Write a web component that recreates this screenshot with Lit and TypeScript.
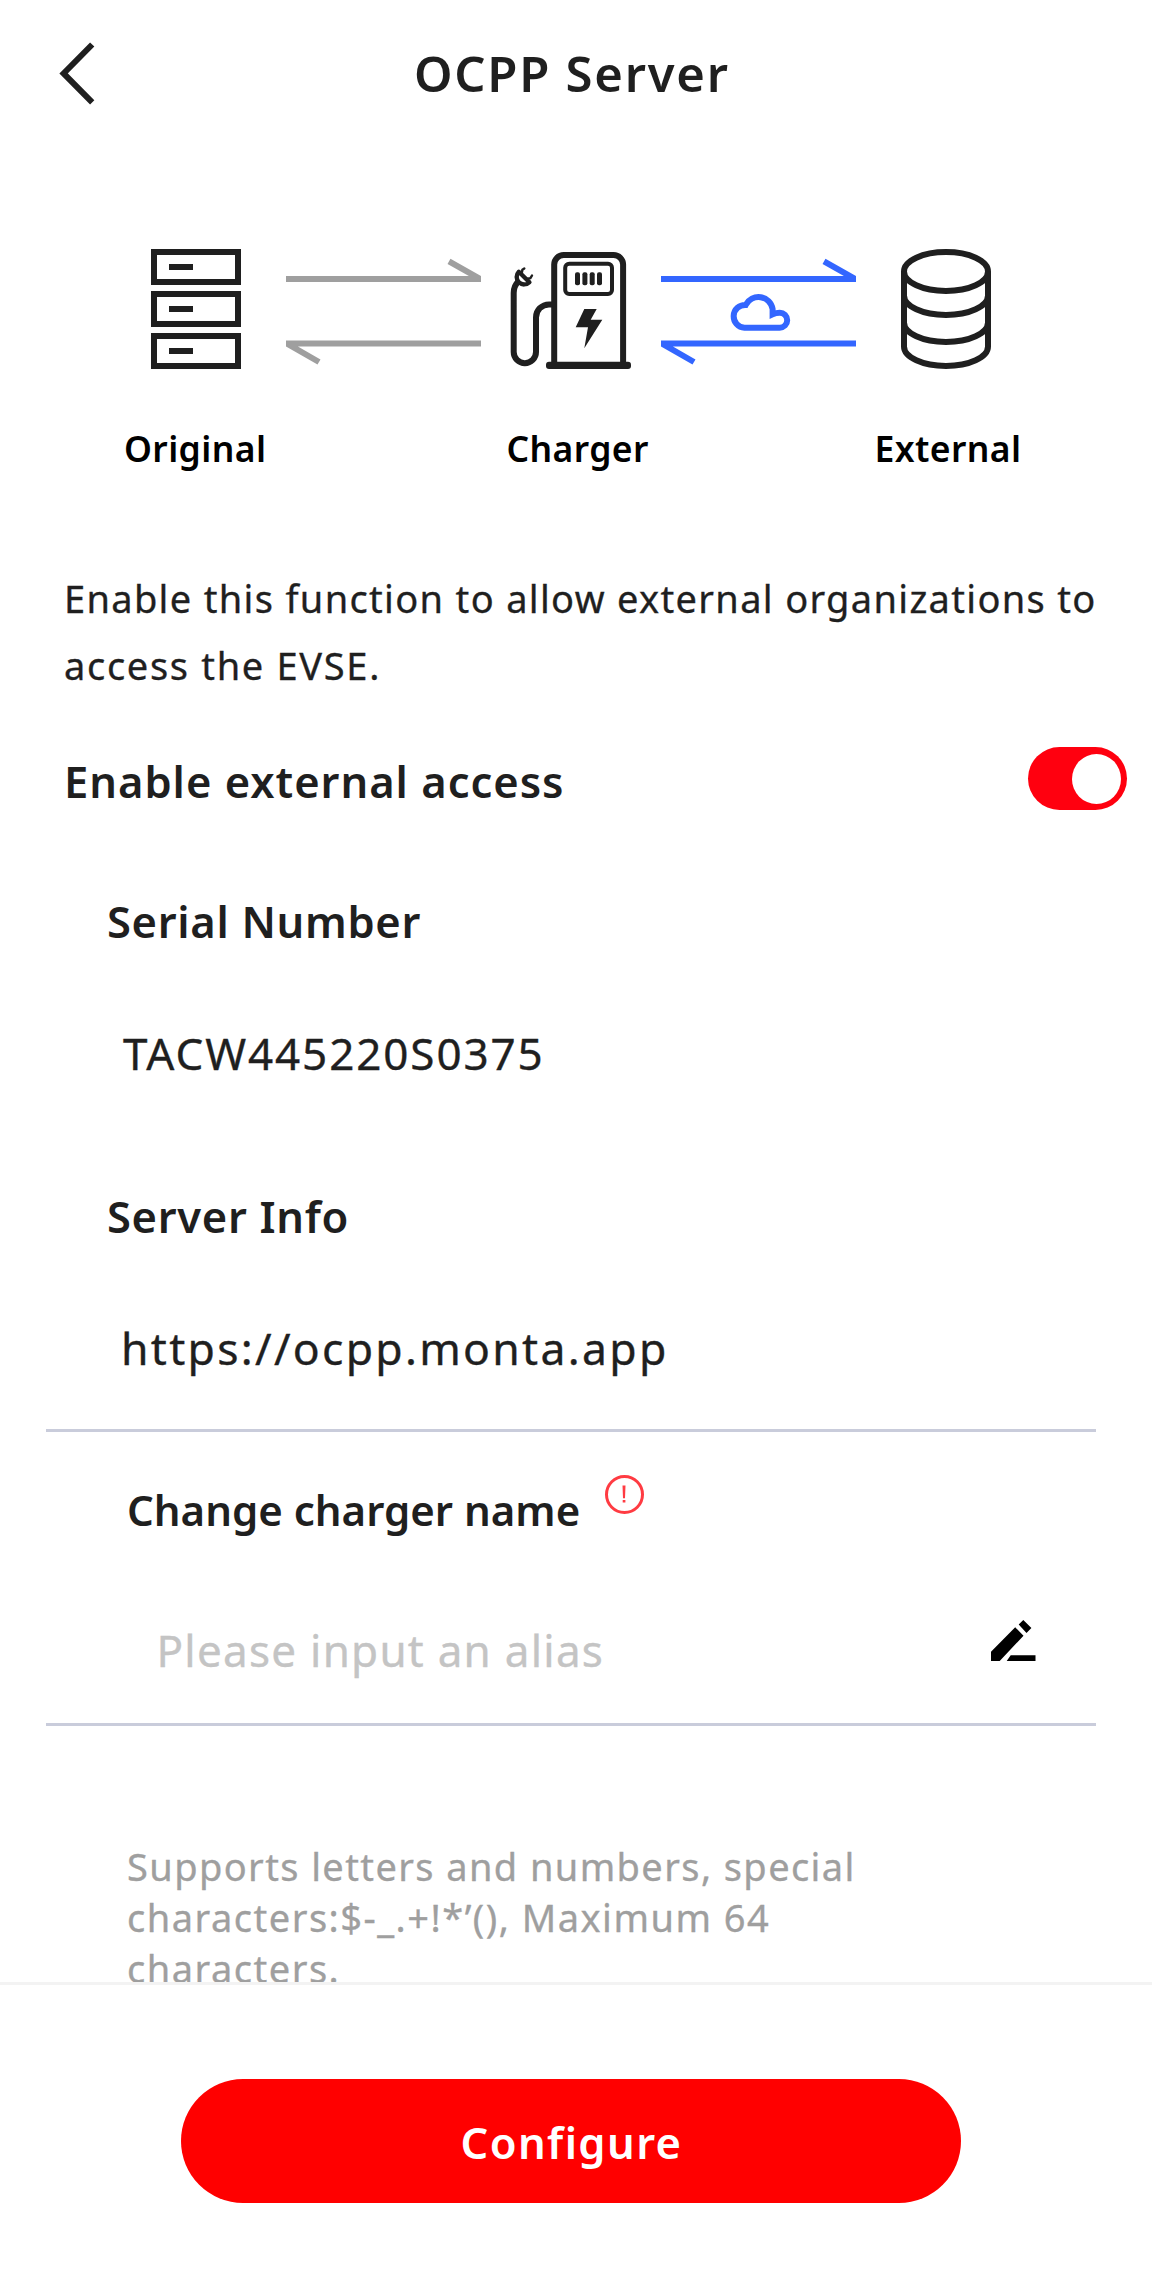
import { LitElement, html, css, svg } from "lit";
import { customElement, property, state } from "lit/decorators.js";

@customElement("link-arrows")
class LinkArrows extends LitElement {
  @property({ type: Boolean }) cloud = false;

  static styles = css`
    :host { display: block; width: 195px; height: 120px; }
    svg { display: block; }
    .stroke { fill: none; stroke: currentColor; stroke-width: 6; }
  `;

  render() {
    return html`
      <svg width="195" height="120" viewBox="0 0 195 120">
        <path class="stroke" d="M0 30H195M163 12.3L195 30.5M195 94.4H0M0 94L33 113" />
        ${this.cloud
          ? svg`<path class="stroke" d="M83.5 78.7H118.7A7.5 7.5 0 0 0 118.7 63.7Q115 63.7 111.6 65.3V60A14.3 14.3 0 0 0 84.7 55.9A11.4 11.4 0 0 0 83.5 78.7Z" />`
          : null}
      </svg>
    `;
  }
}

@customElement("toggle-switch")
class ToggleSwitch extends LitElement {
  @property({ type: Boolean }) checked = false;

  static styles = css`
    :host { display: block; }
    .track {
      box-sizing: border-box;
      display: flex;
      align-items: center;
      width: 99px;
      height: 63px;
      padding: 0 6px;
      border: 0;
      border-radius: 32px;
      background: #c4c4c4;
    }
    .on { justify-content: flex-end; background: #ff000f; }
    .knob { width: 49px; height: 50px; border-radius: 50%; background: #fff; }
  `;

  render() {
    return html`
      <button class="track ${this.checked ? "on" : ""}" role="switch" aria-checked=${this.checked}>
        <span class="knob"></span>
      </button>
    `;
  }
}

@customElement("app-root")
class AppRoot extends LitElement {
  @state() private enabled = true;

  static styles = css`
    :host {
      display: block;
      width: 1152px;
      height: 2296px;
      overflow: hidden;
      background: #fff;
      color: #1f1f1f;
      font-family: "Noto Sans", "Open Sans", sans-serif;
    }
    svg { display: block; flex: none; }
    .page { display: flex; flex-direction: column; height: 2296px; }
    .content { height: 1982px; overflow: hidden; flex: none; }
    .line { fill: none; stroke: #1f1f1f; stroke-width: 6; }
    .ink { fill: #1f1f1f; }

    .header { display: flex; align-items: flex-start; height: 249px; padding-left: 59px; }
    .back { margin-top: 42px; }
    .title {
      margin: 0 0 0 318px;
      font-size: 49px;
      font-weight: 600;
      line-height: 147px;
      letter-spacing: 1.75px;
      white-space: nowrap;
    }

    .icons { display: flex; height: 120px; padding-left: 151px; }
    .grey { margin: 0 29px 0 45px; color: #9f9f9f; }
    .blue { margin: 0 45px 0 30px; color: #3366ff; }
    .labels {
      display: grid;
      grid-template-columns: 382.5px 368px auto;
      padding: 52px 0 0 124px;
      font-size: 35.5px;
      font-weight: 600;
      line-height: 54px;
      letter-spacing: 0.4px;
      color: #000;
    }

    .description, .value, .input, .hint { -webkit-text-stroke: 0.35px currentColor; }
    .description {
      margin: 90px 0 0 64px;
      font-size: 38px;
      line-height: 67.3px;
      letter-spacing: 1.33px;
      white-space: nowrap;
    }
    .second { letter-spacing: 1.68px; }
    .access {
      display: flex;
      justify-content: space-between;
      height: 67px;
      margin-top: 47.5px;
      padding: 0 25px 0 64px;
      font-size: 43.5px;
      font-weight: 600;
      line-height: 68px;
      letter-spacing: 0.98px;
    }

    .field { padding-left: 107px; font-size: 43.5px; line-height: 60px; }
    .serial { margin-top: 76.5px; }
    .server {
      margin: 102.7px 56px 0 46px;
      padding: 0 0 50.5px 61px;
      border-bottom: 3px solid #c9ccdb;
    }
    .name { font-weight: 600; letter-spacing: 0.68px; }
    .value { margin: 72.9px 0 0 16px; font-size: 44px; letter-spacing: 1.9px; }
    .server .value { margin-top: 72.3px; margin-left: 14px; font-size: 44.5px; letter-spacing: 2.3px; }

    .alias {
      height: 291px;
      margin: 0 56px 0 46px;
      border-bottom: 3px solid #c9ccdb;
      font-size: 43.5px;
      line-height: 60px;
    }
    .aliasname {
      display: flex;
      align-items: flex-start;
      padding: 43px 0 0 81px;
      font-size: 42px;
      font-weight: 600;
      white-space: nowrap;
    }
    .aliastext { width: 478px; padding-top: 5px; }
    .input {
      display: flex;
      justify-content: space-between;
      padding: 80px 60px 0 110.5px;
      color: #c4c4c4;
      font-size: 44px;
      letter-spacing: 1.25px;
    }
    .hint {
      margin: 114.8px 0 0 127px;
      font-size: 38px;
      line-height: 51px;
      letter-spacing: 1.4px;
      color: #9f9f9f;
      white-space: nowrap;
    }
    .wide { letter-spacing: 1.5px; }

    .footer {
      flex: 1;
      padding: 94px 0 0 181px;
      border-top: 3px solid #f3f3f3;
      background: #fff;
    }
    .configure {
      display: block;
      width: 780px;
      height: 124px;
      padding: 2px 0 0 1px;
      border: 0;
      border-radius: 62px;
      background: #ff0000;
      color: #fff;
      font: 600 43.5px / 122px "Noto Sans", "Open Sans", sans-serif;
      letter-spacing: 1.4px;
    }
  `;

  private serverIcon() {
    return html`
      <svg width="90" height="120" viewBox="0 0 90 120">
        ${[0, 42, 84].map(
          (y) => svg`<path class="line" d="M3 ${y + 3}H87V${y + 33}H3ZM18 ${y + 18}H42" />`
        )}
      </svg>
    `;
  }

  private chargerIcon() {
    return html`
      <svg width="121" height="120" viewBox="0 0 121 120">
        <path class="line" d="M44.2 115V15.5A9.5 9.5 0 0 1 53.7 6H103.6A9.5 9.5 0 0 1 113.1 15.5V115" />
        <rect class="ink" x="36" y="112.7" width="85" height="7.3" rx="3" />
        <rect x="55.2" y="14.7" width="46.8" height="30.2" rx="4" fill="none" stroke="#1f1f1f" stroke-width="4" />
        ${[65, 72.4, 79.7, 87].map(
          (x) => svg`<rect class="ink" x=${x} y="23.3" width="5" height="13" rx="2" />`
        )}
        <path class="ink" d="M74.3 60H86.7L80.7 70.7H92.3L74.3 99.3L78 78.3H65.7Z" />
        <path class="line" d="M43 55.4H39A13 13 0 0 0 26 68.4V103A11.15 11.15 0 0 1 3.7 103V44Q3.7 37 8 33" />
        <path d="M8.8 22.8L19.4 33.2A7.4 7.4 0 0 1 8.8 22.8Z" fill="none" stroke="#1f1f1f" stroke-width="4.4" stroke-linejoin="round" />
        <path d="M11.8 24L12.4 20.8L14.3 19.5M17.6 29.6L20.4 29.2L22 26.5" fill="none" stroke="#1f1f1f" stroke-width="2.4" stroke-linecap="round" />
      </svg>
    `;
  }

  private databaseIcon() {
    return html`
      <svg width="90" height="120" viewBox="0 0 90 120">
        <ellipse class="line" cx="45" cy="22.5" rx="42" ry="19.5" />
        <path class="line" d="M3 22.5V97.5A42 19.5 0 0 0 87 97.5V22.5M3 46.5A42 19.5 0 0 0 87 46.5M3 73.5A42 19.5 0 0 0 87 73.5" />
      </svg>
    `;
  }

  render() {
    return html`
      <div class="page">
        <div class="content">
          <header class="header">
            <svg class="back" width="37" height="63" viewBox="0 0 37 63">
              <path class="line" d="M33.2 2.5L4.6 31.4L33.2 60.3" />
            </svg>
            <h1 class="title">OCPP Server</h1>
          </header>

          <div class="icons">
            ${this.serverIcon()}
            <link-arrows class="grey"></link-arrows>
            ${this.chargerIcon()}
            <link-arrows class="blue" cloud></link-arrows>
            ${this.databaseIcon()}
          </div>
          <div class="labels"><span>Original</span><span>Charger</span><span>External</span></div>

          <div class="description">
            Enable this function to allow external organizations to<br />
            <span class="second">access the EVSE.</span>
          </div>

          <div class="access">
            <span>Enable external access</span>
            <toggle-switch ?checked=${this.enabled}></toggle-switch>
          </div>

          <section class="field serial">
            <div class="name">Serial Number</div>
            <div class="value">TACW445220S0375</div>
          </section>
          <section class="field server">
            <div class="name">Server Info</div>
            <div class="value">https://ocpp.monta.app</div>
          </section>

          <section class="alias">
            <div class="aliasname">
              <span class="aliastext">Change charger name</span>
              <svg width="39" height="39" viewBox="0 0 39 39" fill="#ff3b42">
                <circle cx="19.5" cy="19.5" r="18" fill="none" stroke="#ff3b42" stroke-width="3" />
                <path d="M17.5 10.5H20.5L20 23.3H18ZM17.7 25H20.4V27.6H17.7Z" />
              </svg>
            </div>
            <div class="input">
              <span>Please input an alias</span>
              <svg width="45" height="41" viewBox="0 0 45 41">
                <path d="M0 31.7L24.2 7.3L32.5 15.7L8.7 41H0ZM27.7 4.4L32.3 0L40.4 8L35.5 13ZM19.7 35.3H44.5V41H15.7Z" />
              </svg>
            </div>
          </section>

          <div class="hint">
            Supports letters and numbers, special<br />
            <span class="wide">characters:$-_.+!*’(), Maximum 64<br />
            characters.</span>
          </div>
        </div>

        <footer class="footer">
          <button class="configure">Configure</button>
        </footer>
      </div>
    `;
  }
}
